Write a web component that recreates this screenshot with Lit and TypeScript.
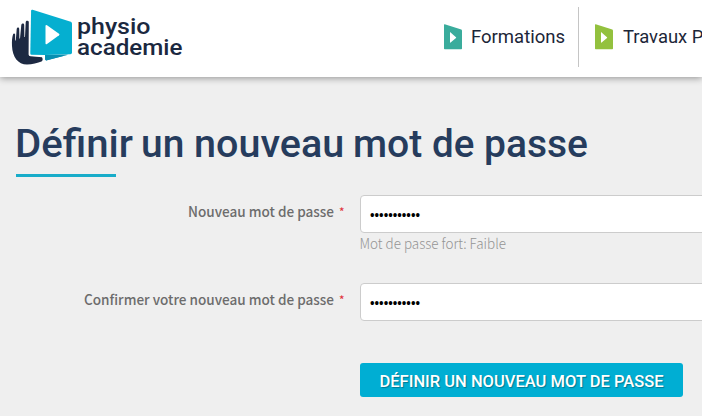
import { LitElement, html, css, svg } from "lit";
import { customElement, property } from "lit/decorators.js";

interface Run {
  t: string;
  x: number;
  w: number;
  y: number;
}

/** Renders words on a baseline, each fitted to its set width. */
@customElement("fitted-text")
class FittedText extends LitElement {
  @property({ attribute: false }) runs: Run[] = [];
  @property({ type: Number }) width = 100;
  @property({ type: Number }) height = 20;

  static styles = css`
    :host { display: block; flex: none; }
    svg { display: block; overflow: visible; }
    text { fill: currentColor; white-space: pre; }
  `;

  render() {
    return html`<svg width=${this.width} height=${this.height}>
      ${this.runs.map(
        (r) => svg`<text x=${r.x} y=${r.y} textLength=${r.w} lengthAdjust="spacingAndGlyphs">${r.t}</text>`
      )}
    </svg>`;
  }
}

@customElement("app-root")
class AppRoot extends LitElement {
  static styles = css`
    :host {
      display: block;
      height: 416px;
      overflow: hidden;
      background: #efefef;
      font-family: Roboto, "Liberation Sans", sans-serif;
    }
    header {
      display: flex;
      height: 77px;
      background: #fff;
      box-shadow: 0 1px 7px rgba(0, 0, 0, 0.4);
      box-sizing: border-box;
      padding-left: 8px;
    }
    .logo { flex: none; width: 64px; height: 77px; }
    .brand { width: 106px; margin-left: 6px; font-size: 22.5px; font-weight: 500; color: #1b2840; }
    nav { display: flex; margin-left: 260px; }
    .item { display: flex; flex: none; font-size: 18.5px; color: #1c2638; }
    .mark { width: 18px; height: 26px; margin: 23.5px 9px 0 0; flex: none; }
    .item fitted-text { margin-top: 24px; }
    .rule { width: 1px; height: 60px; margin: 7px 16px 0 13px; background: #c5c5c5; flex: none; }
    main { padding: 47px 0 0 16px; }
    .title { color: #263c5d; font-size: 39.5px; font-weight: 500; }
    .bar { width: 100px; height: 3px; margin-top: 10px; background: #18acc9; }
    .row { display: grid; grid-template-columns: 328px 360px; column-gap: 16px; margin-top: 18px; }
    .row + .row { margin-top: 30px; }
    .label {
      display: flex;
      justify-content: flex-end;
      color: #6c6c6c;
      font: 500 14px "Noto Sans CJK SC", sans-serif;
    }
    .star { color: #e0343f; font-size: 11px; }
    .field {
      height: 38px;
      box-sizing: border-box;
      border: 1px solid #ccc;
      border-radius: 4px;
      background: #fff;
      padding-left: 9px;
      color: #000;
      font: 14px "Liberation Sans", sans-serif;
    }
    .hint { color: #949494; height: 20px; font: 300 14px "Noto Sans CJK SC", sans-serif; }
    button {
      display: block;
      width: 323px;
      height: 34px;
      margin: 42px 0 0 344px;
      padding: 0 0 0 20px;
      border: 0;
      border-radius: 3px;
      background: #00aed3;
      color: #fff;
      font: 500 17px Roboto, sans-serif;
      text-shadow: 1px 1px 1px rgba(0, 0, 0, 0.3);
    }
  `;

  private mark(color: string) {
    return html`<svg class="mark" viewBox="0 0 18 26">
      <path fill=${color} d="M0.7 0.2 L17.3 5.5 Q18 5.8 18 6.5 V24.5 Q18 25.2 17.3 25.2 H0.7 Q0 25.2 0 24.5 V0.8 Q0 0 0.7 0.2Z" />
      <path fill="#fff" d="M6 8.5 Q6 7.8 6.6 8.4 L12 13.2 Q12.4 13.6 12 14 L6.6 18.5 Q6 19 6 18.2Z" />
    </svg>`;
  }

  private dots() {
    return html`<fitted-text .width=${60} .height=${36} .runs=${[{ t: "•••••••••••", x: 0, w: 50, y: 24 }]}></fitted-text>`;
  }

  render() {
    return html`
      <header>
        <svg class="logo" viewBox="8 0 64 77">
          <path fill="#1d2942" d="M28 21 C26.5 20.5 25.8 21.3 25.7 22.5 L25 37 L24.4 37 L24.2 25 C24 23 21.8 23.3 21.3 25 L20 38.5 L19.4 38.5 L19.2 28.8 C19 27.2 17.2 27.2 16.7 29 L15.8 40.5 L15.2 40.5 L15.1 34.3 C14.8 33 13.3 33.2 13 34.5 C12 38 11.8 41 12 46 C12.5 57 18 64.5 27 64.5 C32 64.5 38 63 41.5 61.5 Q43.5 60 42 57.2 L30.5 56.2 Q28.6 56 28.6 54.5 L28.8 21.5Z" />
          <path fill="#078fb1" d="M45 55 L71 54 L47 60.3 Q45.3 60.7 45 59Z" />
          <path fill="#05afd0" stroke="#fff" stroke-width="2.4" paint-order="stroke" d="M32.6 9.8 L70.8 21.8 Q72 22.2 72 23.5 V52.5 Q72 54.2 70.4 54.3 L45 55 L31.5 54.8 Q30.3 54.7 30.3 53.4 L31.1 10.8 Q31.2 9.4 32.6 9.8Z" />
          <path fill="#078fb1" d="M45 55 L66 54.4 L68 54.8 L47 60.3 Q45.3 60.7 45 59Z" />
          <path fill="#fff" d="M45.5 26 Q45.6 24.4 47 25.3 L59 33.7 Q60 34.5 59 35.3 L47 44 Q45.5 45 45.5 43.3Z" />
        </svg>
        <fitted-text class="brand" .width=${106} .height=${77} .runs=${[
          { t: "physio", x: -1, w: 73.5, y: 34 },
          { t: "academie", x: -1, w: 105.5, y: 55 },
        ]}></fitted-text>
        <nav>
          <div class="item">${this.mark("#3aac9c")}<fitted-text .width=${94} .height=${24} .runs=${[{ t: "Formations", x: 0, w: 94, y: 19 }]}></fitted-text></div>
          <div class="rule"></div>
          <div class="item">${this.mark("#93c13e")}<fitted-text .width=${90} .height=${24} .runs=${[{ t: "Travaux P", x: 1, w: 80.5, y: 19 }]}></fitted-text></div>
        </nav>
      </header>
      <main>
        <fitted-text class="title" .width=${580} .height=${40} .runs=${[
          { t: "Définir ", x: -1, w: 128, y: 33 },
          { t: "un ", x: 125, w: 53, y: 33 },
          { t: "nouveau ", x: 178, w: 160, y: 33 },
          { t: "mot ", x: 337, w: 79, y: 33 },
          { t: "de ", x: 416, w: 52, y: 33 },
          { t: "passe", x: 468, w: 104, y: 33 },
        ]}></fitted-text>
        <div class="bar"></div>
        <div class="row">
          <div class="label">
            <fitted-text .width=${146} .height=${36} .runs=${[{ t: "Nouveau mot de passe", x: 0, w: 146, y: 22 }]}></fitted-text>
            <fitted-text class="star" .width=${10} .height=${36} .runs=${[{ t: "*", x: 5, w: 5.5, y: 21 }]}></fitted-text>
          </div>
          <div>
            <div class="field">${this.dots()}</div>
            <fitted-text class="hint" .width=${150} .height=${20} .runs=${[{ t: "Mot de passe fort: Faible", x: -0.5, w: 146.5, y: 16 }]}></fitted-text>
          </div>
        </div>
        <div class="row">
          <div class="label">
            <fitted-text .width=${250} .height=${36} .runs=${[{ t: "Confirmer votre nouveau mot de passe", x: 0, w: 250, y: 22 }]}></fitted-text>
            <fitted-text class="star" .width=${10} .height=${36} .runs=${[{ t: "*", x: 5, w: 5.5, y: 21 }]}></fitted-text>
          </div>
          <div class="field">${this.dots()}</div>
        </div>
        <button>
          <fitted-text .width=${284} .height=${34} .runs=${[{ t: "DÉFINIR UN NOUVEAU MOT DE PASSE", x: -0.5, w: 284, y: 24 }]}></fitted-text>
        </button>
      </main>
    `;
  }
}
